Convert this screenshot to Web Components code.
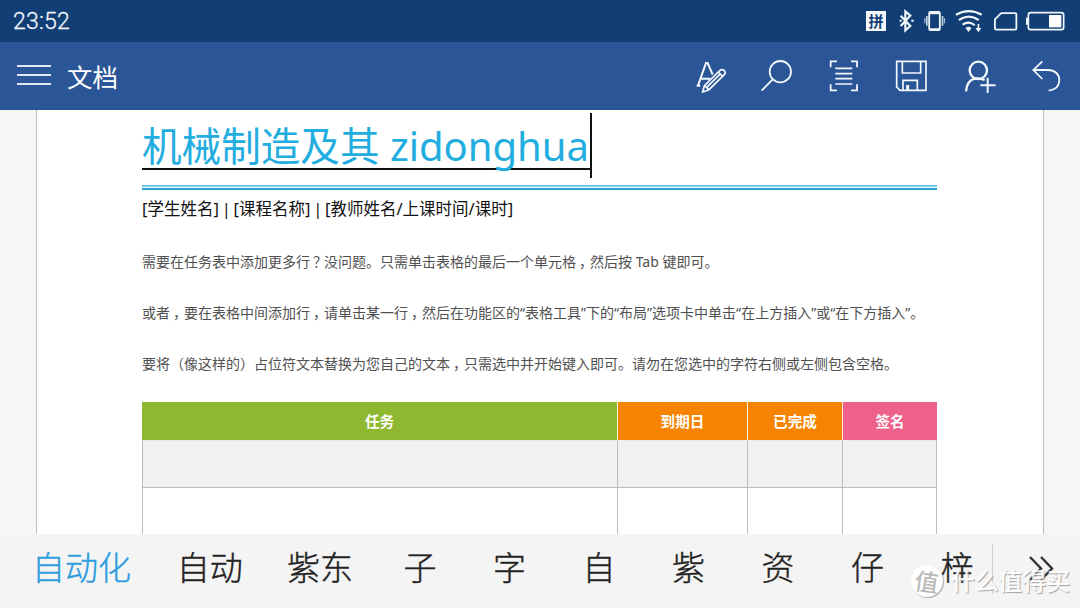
<!DOCTYPE html>
<html lang="zh-CN">
<head>
<meta charset="utf-8">
<title>文档</title>
<style>
html,body{margin:0;padding:0}
body{width:1080px;height:608px;overflow:hidden;font-family:"Noto Sans","Noto Sans CJK SC",sans-serif;background:#f6f6f6}
</style>
</head>
<body>
<word-app></word-app>
<script>
const define=(name,html)=>{
  const t=document.createElement('template');
  t.innerHTML=html;
  customElements.define(name,class extends HTMLElement{
    constructor(){super();this.attachShadow({mode:'open'}).append(t.content.cloneNode(true));}
  });
};

define('status-bar',`<style>
:host{display:flex;box-sizing:border-box;height:42px;background:#113f75;color:#f1f6fb;align-items:center;justify-content:space-between;padding:0 10px 0 13px}
.time{font:300 23px/42px Roboto,sans-serif;letter-spacing:.2px;padding-top:2px;-webkit-text-stroke:.3px #f1f6fb}
.icons{display:flex;height:42px;align-items:center}
svg{display:block;height:42px;fill:none;stroke:#f1f6fb;stroke-width:5.5}
.ime{width:20px;height:20px;margin:0 7px 0 3px;background:#f4f8fc;color:#113f75;font:700 15px/19px "Noto Sans CJK SC",sans-serif;text-align:center}
</style>
<span class="time">23:52</span>
<div class="icons">
<div class="ime">拼</div>
<svg width="25" viewBox="128 0 75 126"><path d="M151 47 180 78 165 91V34L180 47 151 78" stroke-width="6.5"/><path d="M148 62h6M183 62h7" stroke-width="6"/></svg>
<svg width="32" viewBox="205 0 95 126"><rect x="238" y="36" width="32" height="54" rx="4"/><path d="M238 39h32M238 88h32" stroke-width="7"/><path d="M231 48v29M278 48v29" stroke-width="5" opacity=".8"/><path d="M225 55v15M284 55v15" stroke-width="3.5" opacity=".7"/></svg>
<svg width="38" viewBox="300 0 115 126"><path d="M318 44q39-22 78 0M327 60q30-20 60 0M338 74q19-13 37 2" stroke-width="6.5"/><path d="M347 84q9-7 18 0l-9 12z" fill="#f1f6fb" stroke="none"/><path d="M386 72v16" stroke-width="5"/><path d="M377 84h18l-9 13z" fill="#f1f6fb" stroke="none"/></svg>
<svg width="33" viewBox="413 0 100 126"><path d="M453 39h42q4 0 4 4v42q0 4-4 4h-57q-4 0-4-4V58z" stroke-linejoin="round"/></svg>
<svg width="49" viewBox="514 0 145 126"><rect x="535" y="38" width="106" height="51" rx="7" stroke-width="5"/><path d="M531 53v21" stroke-width="6"/><path d="M597 45h37v37h-37z" fill="#fff" stroke="none"/></svg>
</div>`);

define('tool-bar',`<style>
:host{display:flex;box-sizing:border-box;height:68px;background:#2a5697;color:#fff;align-items:center;padding-left:17px;border-bottom:1px solid #24508f}
.menu{display:grid;gap:7px;width:34px;padding-bottom:1px}
.menu i{height:2px;background:#e0e9f5}
h1{flex:1;margin:0 0 0 16px;font:400 25.5px/66px "Noto Sans CJK SC",sans-serif;padding-top:1px}
nav{display:flex;width:403px;height:68px}
svg{display:block;width:67px;height:68px;fill:none;stroke:#f3f8fd;stroke-width:5.3}
</style>
<div class="menu"><i></i><i></i><i></i></div>
<h1>文档</h1>
<nav>
<svg viewBox="-9 -9 201 204"><path d="M50 122H61M54 122 78 54H83L98 89M64 101H91" stroke-width="6"/><path d="M68 141 73 122 120 76Q126 71 133 77 138 83 133 89L87 134ZM73 122 87 134M115 81 128 94M79 128 122 86" stroke-width="5"/></svg>
<svg viewBox="192 -9 201 204"><circle cx="301" cy="80" r="32"/><path d="M278 103 245 137"/></svg>
<svg viewBox="393 -9 201 204"><path d="M452 67V49H471M513 49H531V67M452 118V136H471M513 136H531V118"/><path d="M466 70H517M466 86H517M466 101H517M466 117H517" stroke-width="5"/></svg>
<svg viewBox="594 -9 201 204"><path d="M650 49H738V136H660L650 126ZM667 49V84H722V49M669 136V106H712V136" stroke-width="5"/><path d="M683 120V136" stroke-width="9"/></svg>
<svg viewBox="795 -9 201 204"><circle cx="895" cy="76" r="26" stroke-width="7"/><path d="M858 139Q861 109 880 102 897 98 914 105" stroke-width="7"/><path d="M923 98V144M901 121H947" stroke-width="6"/></svg>
<svg viewBox="996 -9 201 204"><path d="M1087 49 1060 75 1087 102M1060 75H1105Q1137 77 1138 106 1137 134 1106 137"/></svg>
</nav>`);

define('task-table',`<style>
:host{display:grid;box-sizing:border-box;width:795px;height:132px;grid-template-columns:476px 130px 95px 94px;grid-template-rows:38px 48px 60px;overflow:hidden}
div{box-sizing:border-box}
.h{color:#fff;font:700 14.6px/38px "Noto Sans CJK SC",sans-serif;text-align:center;border-right:1px solid #fff4df}
.last{border-right:0}
.c{border-right:1px solid #bcbcbc;border-bottom:1px solid #bcbcbc}
.f{border-left:1px solid #bcbcbc}
.g{background:#f1f1f1;border-top:1px solid #e9e9e9}
</style>
<div class="h" style="background:#8eb82f">任务</div><div class="h" style="background:#f68400">到期日</div><div class="h" style="background:#f68400">已完成</div><div class="h last" style="background:#ee618a">签名</div>
<div class="c g f"></div><div class="c g"></div><div class="c g"></div><div class="c g"></div>
<div class="c f"></div><div class="c"></div><div class="c"></div><div class="c"></div>`);

define('doc-page',`<style>
:host{display:block;box-sizing:border-box;width:1008px;height:424px;margin-left:36px;padding:0 0 0 105px;background:#fff;border-left:1px solid #c0c0c0;border-right:1px solid #bbb;overflow:hidden}
.title{display:flex;height:68px;padding-top:3px;align-items:flex-start}
h2{margin:0;width:448px;height:55px;border-bottom:2px solid #111;box-sizing:content-box;color:#22ade0;font:400 39.6px/66px "Noto Sans","Noto Sans CJK SC",sans-serif;white-space:nowrap}
.l{font-size:40px}
.caret{width:2px;height:65px;background:#111}
.rule{width:795px;height:5px;background:linear-gradient(#5cc0e2 0 1px,#8fd3ea 1px 2px,#eaf7fc 2px 3px,#24a4d2 3px 5px);margin-top:4px}
.sub{font-size:16.5px;line-height:24px;margin:7px 0 0;color:#111;white-space:nowrap;word-spacing:-1.5px}
.p{font-size:14px;line-height:20px;margin:0;color:#505050;white-space:nowrap}
i{font-style:normal;padding-left:3px;letter-spacing:-3px}
</style>
<div class="title"><h2>机械制造及其<span class="l"> zidonghua</span></h2><span class="caret"></span></div>
<div class="rule"></div>
<p class="sub">[学生姓名] | [课程名称] | [教师姓名/上课时间/课时]</p>
<p class="p" style="margin-top:31px">需要在任务表中添加更多行<i>？</i>没问题。只需单击表格的最后一个单元格<i>，</i>然后按 Tab 键即可。</p>
<p class="p" style="margin-top:31px">或者<i>，</i>要在表格中间添加行<i>，</i>请单击某一行<i>，</i>然后在功能区的“表格工具”下的“布局”选项卡中单击“在上方插入”或“在下方插入”。</p>
<p class="p" style="margin-top:31px">要将（像这样的）占位符文本替换为您自己的文本<i>，</i>只需选中并开始键入即可。请勿在您选中的字符右侧或左侧包含空格。</p>
<task-table style="margin-top:28px"></task-table>`);

define('ime-word',`<style>
:host{display:block;box-sizing:border-box;flex:none;width:89.5px;text-align:center;font:300 33px/65px "Noto Sans CJK SC",sans-serif;color:#222;white-space:nowrap;-webkit-text-stroke:.4px}
:host([size="2"]){width:110.4px}
:host([size="3"]){width:146px;color:#2d9ddd}
</style><slot></slot>`);

define('candidate-bar',`<style>
:host{display:flex;box-sizing:border-box;height:74px;background:#f4f4f4;padding-left:8.5px}
.words{display:flex;width:983.5px}
.more{width:87px;height:50px;margin-top:10px;border-left:1px solid #d0d0d0}
svg{display:block;margin:12px 0 0 36px}
</style>
<div class="words"><ime-word size="3">自动化</ime-word><ime-word size="2">自动</ime-word><ime-word size="2">紫东</ime-word><ime-word>子</ime-word><ime-word>字</ime-word><ime-word>自</ime-word><ime-word>紫</ime-word><ime-word>资</ime-word><ime-word>仔</ime-word><ime-word>梓</ime-word></div>
<div class="more"><svg width="26" height="26" fill="none" stroke="#333" stroke-width="2.400"><path d="M1 1 12 12.500 1 24M12 1 23 12.500 12 24"/></svg></div>`);

define('water-mark',`<style>
:host{position:absolute;left:911px;top:565px;display:flex;align-items:center;color:#fff;font:500 23.8px/32px "Noto Sans CJK SC",sans-serif;white-space:nowrap}
.badge{width:32px;height:32px;border-radius:50%;background:#fff;box-shadow:1px 1px 1px #aaa;color:#bbb;text-align:center;margin-right:8px}
.badge span{display:block;transform:rotate(8deg)}
.t{opacity:.88;text-shadow:1px 1px 1px #999;margin-top:-2px}
</style><div class="badge"><span>值</span></div><span class="t">什么值得买</span>`);

define('word-app',`<style>
:host{display:flex;flex-direction:column;position:relative;width:1080px;height:608px;overflow:hidden;background:#f6f6f6}
</style>
<status-bar></status-bar><tool-bar></tool-bar><doc-page></doc-page><candidate-bar></candidate-bar><water-mark></water-mark>`);
</script>
</body>
</html>
